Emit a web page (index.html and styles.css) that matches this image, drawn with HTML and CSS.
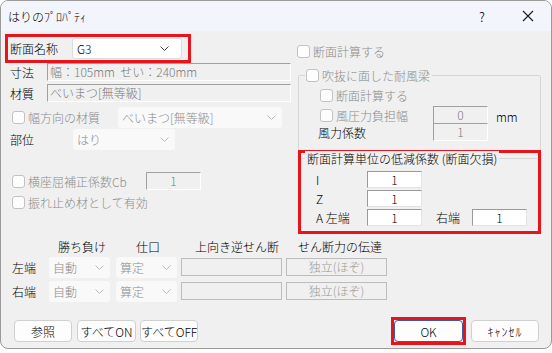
FILE: index.html
```html
<!DOCTYPE html>
<html lang="ja">
<head>
  <meta charset="UTF-8" />
  <title>はりのプロパティ</title>
  <link rel="stylesheet" href="styles.css">
</head>
<body>
  <div class="win">
    <div class="titlebar">
      <span class="title">はりのﾌﾟﾛﾊﾟﾃｨ</span>
      <span class="tb-help">?</span>
      <span class="tb-close">
        <svg width="12" height="12" viewBox="0 0 12 12"><path d="M1 1 L11 11 M11 1 L1 11" stroke="#1a1a1a" stroke-width="1.1" fill="none"/></svg>
      </span>
    </div>

    <div class="body">
      <div class="upper">
        <div class="left">
          <div class="hl name-row">
            <span class="lbl">断面名称</span>
            <div class="combo on name-combo"><span>G3</span>
              <svg class="chev" width="9" height="5" viewBox="0 0 9 5"><path d="M0.5 0.5 L4.5 4.5 L8.5 0.5" stroke="#444" fill="none"/></svg>
            </div>
          </div>
          <div class="row r-size">
            <span class="lbl">寸法</span>
            <div class="ro wide">幅：105mm&nbsp;&nbsp;せい：240mm</div>
          </div>
          <div class="row r-mat">
            <span class="lbl">材質</span>
            <div class="ro wide">べいまつ[無等級]</div>
          </div>
          <div class="row r-wmat">
            <span class="cb off"></span><span class="dis">幅方向の材質</span>
            <div class="combo wmat-combo"><span>べいまつ[無等級]</span>
              <svg class="chev" width="9" height="5" viewBox="0 0 9 5"><path d="M0.5 0.5 L4.5 4.5 L8.5 0.5" stroke="#bbb" fill="none"/></svg>
            </div>
          </div>
          <div class="row r-part">
            <span class="lbl">部位</span>
            <div class="combo part-combo"><span>はり</span>
              <svg class="chev" width="9" height="5" viewBox="0 0 9 5"><path d="M0.5 0.5 L4.5 4.5 L8.5 0.5" stroke="#bbb" fill="none"/></svg>
            </div>
          </div>
          <div class="row r-cb">
            <span class="cb off"></span><span class="dis cb-lbl">横座屈補正係数Cb</span>
            <div class="ro num">1</div>
          </div>
          <div class="row r-brace">
            <span class="cb off"></span><span class="dis">振れ止め材として有効</span>
          </div>
        </div>

        <div class="right">
          <div class="row r-calc">
            <span class="cb off"></span><span class="dis">断面計算する</span>
          </div>
          <div class="group g-wind">
            <div class="legend"><span class="cb off"></span><span class="dis">吹抜に面した耐風梁</span></div>
            <div class="row in r-wcalc">
              <span class="cb off"></span><span class="dis">断面計算する</span>
            </div>
            <div class="row in r-wp">
              <span class="cb off"></span><span class="dis wp-lbl">風圧力負担幅</span>
              <div class="ro num">0</div><span class="unit">mm</span>
            </div>
            <div class="row in r-wc">
              <span class="wc-lbl">風力係数</span>
              <div class="ro num">1</div>
            </div>
          </div>
          <div class="hl red-group">
            <div class="group g-red">
              <div class="legend plain">断面計算単位の低減係数 (断面欠損)</div>
              <div class="row coef first">
                <span class="c-lbl">I</span><div class="ed">1</div>
              </div>
              <div class="row coef">
                <span class="c-lbl">Z</span><div class="ed">1</div>
              </div>
              <div class="row coef">
                <span class="c-lbl">A 左端</span><div class="ed">1</div>
                <span class="c-right">右端</span><div class="ed">1</div>
              </div>
            </div>
          </div>
        </div>
      </div>

      <div class="ends">
        <div class="end-row head">
          <span class="e-lbl"></span>
          <span class="h1">勝ち負け</span>
          <span class="h2">仕口</span>
          <span class="h3">上向き逆せん断</span>
          <span class="h4">せん断力の伝達</span>
        </div>
        <div class="end-row">
          <span class="e-lbl">左端</span>
          <div class="combo e-combo"><span>自動</span><svg class="chev" width="9" height="5" viewBox="0 0 9 5"><path d="M0.5 0.5 L4.5 4.5 L8.5 0.5" stroke="#bbb" fill="none"/></svg></div>
          <div class="combo e-combo e2"><span>算定</span><svg class="chev" width="9" height="5" viewBox="0 0 9 5"><path d="M0.5 0.5 L4.5 4.5 L8.5 0.5" stroke="#bbb" fill="none"/></svg></div>
          <div class="box e-up"></div>
          <div class="box e-tr">独立(ほぞ)</div>
        </div>
        <div class="end-row">
          <span class="e-lbl">右端</span>
          <div class="combo e-combo"><span>自動</span><svg class="chev" width="9" height="5" viewBox="0 0 9 5"><path d="M0.5 0.5 L4.5 4.5 L8.5 0.5" stroke="#bbb" fill="none"/></svg></div>
          <div class="combo e-combo e2"><span>算定</span><svg class="chev" width="9" height="5" viewBox="0 0 9 5"><path d="M0.5 0.5 L4.5 4.5 L8.5 0.5" stroke="#bbb" fill="none"/></svg></div>
          <div class="box e-up"></div>
          <div class="box e-tr">独立(ほぞ)</div>
        </div>
      </div>

      <div class="buttons">
        <button class="btn b-ref">参照</button>
        <button class="btn b-on">すべてON</button>
        <button class="btn b-off">すべてOFF</button>
        <span class="spacer"></span>
        <span class="hl ok-hl"><button class="btn ok">OK</button></span>
        <button class="btn b-cancel">ｷｬﾝｾﾙ</button>
      </div>
    </div>
  </div>
</body>
</html>
```

FILE: styles.css
```css
* {
  margin: 0;
  padding: 0;
  box-sizing: border-box;
}
body {
  background-color: #ffffff;
  font-family: "Noto Sans CJK JP", "Noto Sans", sans-serif;
  font-size: 12px;
  font-weight: 300;
  color: #000;
}
.win {
  width: 552px;
  height: 349px;
  border: 1px solid #9a9a9a;
  border-radius: 8px;
  background-color: #f0f0f0;
  overflow: hidden;
}
.titlebar {
  height: 30px;
  background-color: #f2f5fb;
  display: flex;
  align-items: center;
  padding-left: 7px;
}
.title {
  flex: 1;
  font-size: 12px;
}
.tb-help {
  font-size: 13px;
  width: 46px;
  text-align: center;
}
.tb-close {
  width: 46px;
  display: flex;
  justify-content: center;
}

.body {
  height: 317px;
  display: flex;
  flex-direction: column;
}
.upper {
  display: flex;
  height: 204px;
}
.left {
  width: 296px;
  padding-left: 4px;
}
.right {
  width: 245px;
}

.row {
  display: flex;
  align-items: center;
  white-space: nowrap;
}
.lbl {
  width: 37px;
}
.dis {
  color: #8c8c8c;
}

/* red highlight */
.hl {
  border: 3px solid #e8141b;
}

.name-row {
  margin-top: 3px;
  width: 186px;
  height: 29px;
  display: flex;
  align-items: center;
  padding-left: 2px;
}
.name-row .lbl {
  width: 62px;
}

.combo {
  height: 21px;
  display: flex;
  align-items: center;
  justify-content: space-between;
  padding: 0 6px 0 4px;
  background-color: #f9f9f9;
  border-radius: 3px;
  color: #8c8c8c;
  white-space: nowrap;
}
.combo.on {
  background-color: #ffffff;
  border: 1px solid #dcdcdc;
  color: #000;
}
.name-combo {
  width: 110px;
  padding-right: 12px;
}

.ro {
  height: 18px;
  line-height: 16px;
  border-top: 1px solid #a0a0a0;
  border-left: 1px solid #a0a0a0;
  border-right: 1px solid #ffffff;
  border-bottom: 1px solid #ffffff;
  color: #7a7a7a;
  padding-left: 2px;
}
.ro.wide {
  width: 244px;
}
.ro.num {
  width: 55px;
  text-align: center;
  padding-left: 0;
}
.r-size {
  padding-left: 5px;
  height: 18px;
}
.r-mat {
  padding-left: 5px;
  height: 18px;
  margin-top: 3px;
}
.r-wmat {
  padding-left: 7px;
  height: 21px;
  margin-top: 5px;
}
.r-wmat .dis {
  width: 90px;
}
.wmat-combo {
  width: 164px;
}
.r-part {
  padding-left: 5px;
  height: 19px;
  margin-top: 2px;
}
.r-part .lbl {
  width: 63px;
}
.part-combo {
  width: 102px;
}
.r-cb {
  padding-left: 7px;
  height: 18px;
  margin-top: 23px;
}
.cb-lbl {
  width: 118px;
}
.r-brace {
  padding-left: 7px;
  height: 18px;
  margin-top: 3px;
}

.cb {
  width: 13px;
  height: 13px;
  border: 1px solid #9a9a9a;
  border-radius: 3px;
  background-color: #fdfdfd;
  margin-right: 3px;
  flex: none;
}
.cb.off {
  border-color: #c2c2c2;
}

/* right column */
.r-calc {
  margin-top: 12px;
  height: 16px;
}
.group {
  border: 1px solid #d6d6d6;
  border-radius: 2px;
}
.g-wind {
  margin: 16px 0 0 1px;
  width: 243px;
  height: 76px;
  padding-left: 21px;
}
.legend {
  display: flex;
  width: fit-content;
  align-items: center;
  background-color: #f0f0f0;
  margin: -8px 0 0 -15px;
  padding: 0 2px 0 1px;
  height: 15px;
  white-space: nowrap;
}
.legend.plain {
  margin: -8px 0 0 -11px;
  padding: 0 2px;
}
.in {
  height: 18px;
}
.r-wcalc {
  margin-top: 3px;
}
.r-wp {
  margin-top: 2px;
}
.wp-lbl {
  width: 97px;
}
.unit {
  margin-left: 8px;
  margin-top: 3px;
}
.r-wc {
  margin-top: -1px;
  margin-left: -2px;
}
.wc-lbl {
  width: 115px;
}

.red-group {
  margin: -1px 0 0 1px;
  width: 243px;
  height: 84px;
  background-color: #f0f0f0;
}
.g-red {
  border-width: 1px 0 0 0;
  margin-top: 5px;
  height: 73px;
  padding-left: 15px;
}
.coef {
  height: 17px;
  margin-bottom: 2px;
}
.coef.first {
  margin-top: 5px;
}
.c-lbl {
  width: 51px;
}
.c-right {
  margin-left: 14px;
  width: 36px;
}
.ed {
  width: 55px;
  height: 17px;
  line-height: 15px;
  background-color: #ffffff;
  border-top: 1px solid #9a9a9a;
  border-left: 1px solid #9a9a9a;
  border-right: 1px solid #e3e3e3;
  border-bottom: 1px solid #e3e3e3;
  text-align: center;
}

/* ends table */
.ends {
  padding-left: 11px;
}
.end-row {
  display: flex;
  align-items: center;
  height: 24px;
  white-space: nowrap;
}
.end-row.head {
  height: 18px;
  margin-top: 2px;
}
.e-lbl {
  width: 37px;
}
.h1, .h2, .h3, .h4 {
  flex: none;
}
.h1 {
  width: 87px;
  padding-left: 9px;
}
.h2 {
  width: 59px;
}
.h3 {
  width: 103px;
}
.e-combo {
  width: 61px;
  height: 21px;
  margin-right: 6px;
}
.e-combo.e2 {
  margin-right: 4px;
}
.box {
  height: 18px;
  line-height: 16px;
  border: 1px solid #bcbcbc;
  color: #9a9a9a;
  text-align: center;
}
.e-up {
  width: 101px;
  margin-right: 4px;
}
.e-tr {
  width: 101px;
}

/* buttons */
.buttons {
  display: flex;
  align-items: center;
  margin-top: 14px;
  padding-left: 13px;
}
.btn {
  font-family: inherit;
  font-size: 12px;
  font-weight: 300;
  height: 22px;
  padding: 0;
  white-space: nowrap;
  background-color: #fdfdfd;
  border: 1px solid #d0d0d0;
  border-radius: 4px;
  color: #000;
}
.b-ref {
  width: 58px;
  margin-right: 5px;
}
.b-on {
  width: 59px;
  margin-right: 4px;
}
.b-off {
  width: 58px;
}
.spacer {
  flex: 1;
}
.ok-hl {
  display: flex;
  margin-right: 5px;
}
.ok {
  width: 69px;
  border-color: #3c5a9c;
}
.b-cancel {
  width: 68px;
  margin-right: 12px;
  letter-spacing: 1px;
}
```
